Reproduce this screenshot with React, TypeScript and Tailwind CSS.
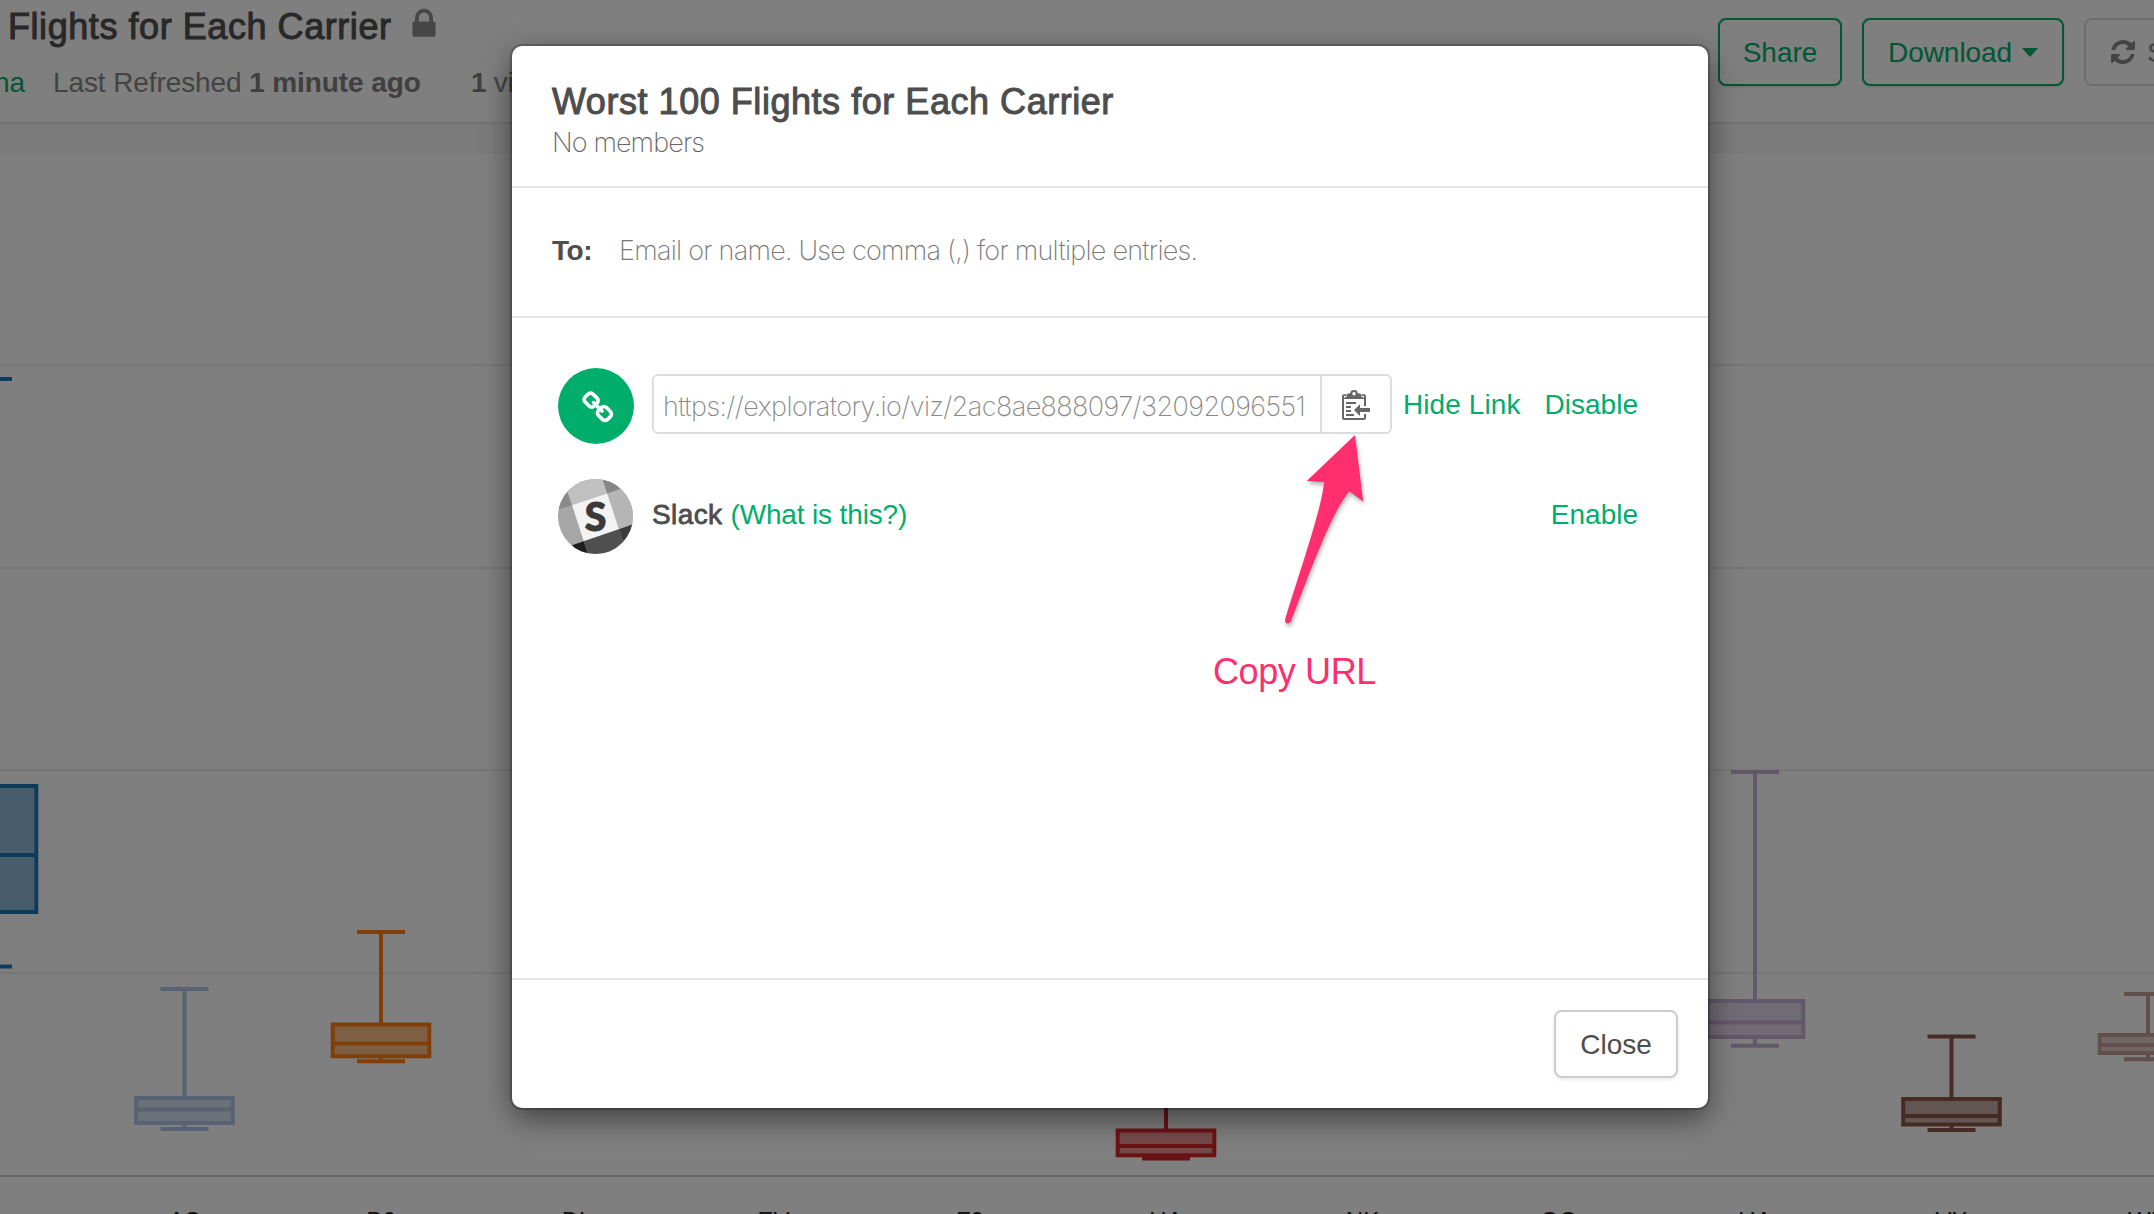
type Box = {
  label: string;
  x: number;
  color: string;
  high: number;
  q3: number;
  median: number;
  q1: number;
  low: number;
};

const boxes: Box[] = [
  { label: "AA", x: -12, color: "#1f77b4", high: 379, q3: 786, median: 855, q1: 912, low: 966.5 },
  { label: "AS", x: 184.5, color: "#aec7e8", high: 989, q3: 1098, median: 1109.5, q1: 1123, low: 1129 },
  { label: "B6", x: 381, color: "#ff7f0e", high: 932, q3: 1024.5, median: 1043.5, q1: 1056.3, low: 1061.2 },
  { label: "HA", x: 1166, color: "#d62728", high: 1050, q3: 1130.5, median: 1146, q1: 1155.3, low: 1158.5 },
  { label: "UA", x: 1755, color: "#c5b0d5", high: 772, q3: 1001, median: 1022.5, q1: 1037, low: 1045.7 },
  { label: "VX", x: 1951.5, color: "#8c564b", high: 1036.5, q3: 1099, median: 1116, q1: 1124.5, low: 1130 },
  { label: "WN", x: 2148, color: "#c49c94", high: 994, q3: 1035, median: 1045, q1: 1053, low: 1059.3 },
];

const gridLines = [365, 568, 770, 973];

const axisLabels: [string, number][] = [
  ["AA", -12],
  ["AS", 184.5],
  ["B6", 381],
  ["DL", 577],
  ["EV", 773.5],
  ["F9", 970],
  ["HA", 1166],
  ["NK", 1362.5],
  ["OO", 1559],
  ["UA", 1755],
  ["VX", 1951.5],
  ["WN", 2148],
];

function BoxPlot() {
  return (
    <svg className="block h-[1090px] w-[2154px]" viewBox="0 124 2154 1090">
      <rect x="0" y="124" width="2154" height="30" fill="#f7f7f7" />
      {gridLines.map((y) => (
        <rect key={y} x="0" y={y - 1} width="2154" height="2" fill="#ededed" />
      ))}
      <rect x="0" y="1175" width="2154" height="2" fill="#d2d2d2" />
      {boxes.map((b) => (
        <g key={b.label} stroke={b.color} strokeWidth="4">
          <rect x={b.x - 48.3} y={b.q3} width="96.6" height={b.q1 - b.q3} fill={b.color} fillOpacity="0.5" />
          <path
            fill="none"
            d={`M${b.x - 24} ${b.high}H${b.x + 24}M${b.x} ${b.high}V${b.q3}M${b.x - 48} ${b.median}H${b.x + 48}M${b.x} ${b.q1}V${b.low}M${b.x - 24} ${b.low}H${b.x + 24}`}
          />
        </g>
      ))}
      {axisLabels.map(([label, x]) => (
        <text key={label} x={x} y="1229" textAnchor="middle" fontSize="24" fill="#222">
          {label}
        </text>
      ))}
    </svg>
  );
}

function LockIcon() {
  return (
    <svg className="h-9 w-9" viewBox="0 0 1792 1792" fill="#8f8f8f">
      <path d="M640 768h512v-192q0-106-75-181t-181-75-181 75-75 181v192zm832 96v576q0 40-28 68t-68 28h-960q-40 0-68-28t-28-68v-576q0-40 28-68t68-28h32v-192q0-184 132-316t316-132 316 132 132 316v192h32q40 0 68 28t28 68z" />
    </svg>
  );
}

function RefreshIcon() {
  return (
    <svg className="h-7 w-7" viewBox="0 0 1792 1792" fill="#8a8a8a">
      <path d="M1639 1056q0 5-1 7-64 268-268 434.5t-478 166.5q-146 0-282.5-55t-243.5-157l-129 129q-19 19-45 19t-45-19-19-45v-448q0-26 19-45t45-19h448q26 0 45 19t19 45-19 45l-137 137q71 66 161 102t187 36q134 0 250-65t186-179q11-17 53-117 8-23 30-23h192q13 0 22.5 9.5t9.5 22.5zm25-800v448q0 26-19 45t-45 19h-448q-26 0-45-19t-19-45 19-45l138-138q-148-137-349-137-134 0-250 65t-186 179q-11 17-53 117-8 23-30 23h-199q-13 0-22.5-9.5t-9.5-22.5v-7q65-268 270-434.5t480-166.5q146 0 284 55.5t245 156.5l130-129q19-19 45-19t45 19 19 45z" />
    </svg>
  );
}

function ChainIcon() {
  return (
    <svg className="h-[34px] w-[34px]" viewBox="0 0 1792 1792" fill="#fff">
      <path d="M1456 1216q0-40-28-68l-208-208q-28-28-68-28-42 0-72 32 3 3 19 18.5t21.5 21.5 15 19 13 25.5 3.5 27.5q0 40-28 68t-68 28q-15 0-27.5-3.5t-25.5-13-19-15-21.5-21.5-18.5-19q-33 31-33 73 0 40 28 68l206 207q27 27 68 27 40 0 68-26l147-146q28-28 28-67zm-703-705q0-40-28-68l-206-207q-28-28-68-28-39 0-68 27l-147 146q-28 28-28 67 0 40 28 68l208 208q27 27 68 27 42 0 72-31-3-3-19-18.5t-21.5-21.5-15-19-13-25.5-3.5-27.5q0-40 28-68t68-28q15 0 27.5 3.5t25.5 13 19 15 21.5 21.5 18.5 19q33-31 33-73zm895 705q0 120-85 203l-147 146q-83 83-203 83-121 0-204-85l-206-207q-83-83-83-203 0-123 88-209l-88-88q-86 88-208 88-120 0-204-84l-208-208q-84-84-84-204t85-203l147-146q83-83 203-83 121 0 204 85l206 207q83 83 83 203 0 123-88 209l88 88q86-88 208-88 120 0 204 84l208 208q84 84 84 204z" />
    </svg>
  );
}

function SlackLogo() {
  return (
    <svg className="h-[75px] w-[75px]" viewBox="56 385 224 224">
      <clipPath id="slack-circle">
        <circle cx="168" cy="497" r="112" />
      </clipPath>
      <g clipPath="url(#slack-circle)">
        <rect x="50" y="380" width="240" height="240" fill="#a6a6a6" />
        <polygon points="50,380 70,380 98,463 50,479" fill="#8a8a8a" />
        <polygon points="70,380 187.500,380 203,428 98,463" fill="#c0c0c0" />
        <polygon points="187.500,380 290,380 290,399 203,428" fill="#868686" />
        <polygon points="203,428 290,399 290,517 238,535" fill="#b5b5b5" />
        <polygon points="98,463 203,428 238,535 133,571" fill="#f3f3f3" />
        <polygon points="50,599 133,571 149,620 50,620" fill="#1e1e1e" />
        <polygon points="133,571 238,535 267,620 149,620" fill="#4f4f4f" />
        <polygon points="238,535 290,517 290,620 267,620" fill="#3b3b3b" />
        <text
          x="168"
          y="541"
          textAnchor="middle"
          fontFamily="Lato"
          fontWeight="900"
          fontSize="117"
          fill="#3a3a3a"
          stroke="#3a3a3a"
          strokeWidth="3"
        >
          S
        </text>
      </g>
    </svg>
  );
}

function ClipboardIcon() {
  return (
    <svg className="block h-[30px] w-7" viewBox="0 0 28 30" fill="#666">
      <path d="M0 6.500Q0 4.300 2.200 4.300H4.500V6H2V28H22V24H24V27.800Q24 30 21.800 30H2.200Q0 30 0 27.800ZM19.500 4.300H21.800Q24 4.300 24 6.500V16H22V6H19.500Z" />
      <path
        fillRule="evenodd"
        d="M2 9V8L5 6.300V4.300Q5.500 3.300 8.200 3.300Q8.500 0 12 0Q15.500 0 15.800 3.300Q18.500 3.300 19 4.300V6.300L22 8V9ZM12 2A1.700 1.700 0 0 0 12 5.400A1.700 1.700 0 0 0 12 2Z"
      />
      <path d="M4 12H14V14H4ZM4 16H9V18H4ZM4 20H9V22H4ZM4 24H12V26H4Z" />
      <path d="M12 20L18 14.300V18H28V22H18V26Z" />
    </svg>
  );
}

function CopyArrow() {
  return (
    <svg
      className="absolute left-[1270px] top-[425px] h-[210px] w-[110px] overflow-visible drop-shadow-[1px_3px_2px_rgba(0,0,0,0.3)]"
      viewBox="1270 425 110 210"
    >
      <path
        d="M1355 435L1363.200 501.500L1349.300 491.300C1334 510 1319 550 1309 574L1290.500 622Q1285.500 626 1285 620C1299 574 1323 505 1324 482L1306.700 481Z"
        fill="#ff2e6e"
      />
    </svg>
  );
}

function TopBar() {
  return (
    <header className="flex h-[124px] justify-between border-b-2 border-[#e6e6e6]">
      <div className="pt-[7px]">
        <div className="flex h-10 items-center pl-2">
          <h1 className="whitespace-nowrap text-[36px] leading-10 tracking-[0.56px] text-[#505050] [-webkit-text-stroke:1px_#505050]">
            Flights for Each Carrier
          </h1>
          <span className="-mt-1.5 ml-[14px]">
            <LockIcon />
          </span>
        </div>
        <div className="mt-[18px] flex whitespace-nowrap text-[28px] leading-9 text-[#868686]">
          <span className="-ml-[6px] w-[59px] text-[#00ad6b]">na</span>
          <span className="w-[418px] tracking-[-0.1px]">
            Last Refreshed <b className="text-[#808080]">1 minute ago</b>
          </span>
          <span className="tracking-[-0.3px]">
            <b className="text-[#808080]">1</b> views
          </span>
        </div>
      </div>
      <div className="-mr-[70px] flex gap-5 pt-[18px] text-[28px]">
        <button className="h-[68px] w-[124px] rounded-lg border-2 border-[#00ad6b] pt-0.5 text-[#00ad6b] shadow-sm">Share</button>
        <button className="flex h-[68px] w-[202px] items-center rounded-lg border-2 border-[#00ad6b] pl-6 text-[#00ad6b] shadow-sm">
          <span className="pt-0.5 tracking-[-0.05px]">Download</span>
          <span className="ml-[10px] border-x-8 border-t-[9px] border-x-transparent border-t-[#00ad6b]" />
        </button>
        <button className="flex h-[68px] w-[140px] items-center gap-2.5 rounded-lg border-2 border-[#dcdcdc] pl-[23px] text-[#8a8a8a]">
          <RefreshIcon />
          <span className="pt-0.5">Sync</span>
        </button>
      </div>
    </header>
  );
}

function ShareDialog() {
  return (
    <section className="mt-[46px] flex h-[1062px] w-[1196px] flex-col rounded-[10px] bg-white text-[28px] text-[#4d4d4d] shadow-[0_0_0_2px_rgba(0,0,0,0.2),0_10px_30px_rgba(0,0,0,0.5)]">
      <div className="h-[142px] border-b-2 border-[#e5e5e5] pl-10 pt-9">
        <h2 className="whitespace-nowrap text-[36px] leading-10 tracking-[0.54px] [-webkit-text-stroke:1px_#4d4d4d]">
          Worst 100 Flights for Each Carrier
        </h2>
        <p className="mt-[5px] font-['Inter'] text-[27px] font-extralight leading-8 tracking-[-0.9px] text-[#666]">No members</p>
      </div>
      <div className="flex h-[130px] items-center border-b-2 border-[#e5e5e5] pb-0.5 pl-10">
        <b className="w-[67px] tracking-[-0.5px]">To:</b>
        <span className="font-['Inter'] text-[27px] font-extralight tracking-[-0.75px] text-[#777]">
          Email or name. Use comma (,) for multiple entries.
        </span>
      </div>
      <div className="flex h-[660px] flex-col gap-[34px] pl-[46px] pr-[70px] pt-[50px]">
        <div className="flex h-[76px] items-center">
          <span className="flex h-[76px] w-[76px] items-center justify-center rounded-full bg-[#00ad6b]">
            <span className="ml-[5px] mt-[3px]">
              <ChainIcon />
            </span>
          </span>
          <div className="-mt-1 ml-[18px] flex h-[60px] w-[740px] rounded-md border-2 border-[#ddd]">
            <span className="flex w-[666px] items-center whitespace-nowrap pl-[9px] pt-[6px] font-['Inter'] text-[27px] font-extralight tracking-[-0.58px] text-[#888]">
              https://exploratory.io/viz/2ac8ae888097/32092096551
            </span>
            <span className="flex-1 border-l-2 border-[#ddd] pl-[20px] pt-[14px]">
              <ClipboardIcon />
            </span>
          </div>
          <div className="-mt-0.5 ml-auto flex gap-6 whitespace-nowrap text-[#00ad6b]">
            <span className="tracking-[0.1px]">Hide Link</span>
            <span>Disable</span>
          </div>
        </div>
        <div className="flex h-[76px] items-center">
          <span className="w-[94px]">
            <SlackLogo />
          </span>
          <span className="-mt-0.5 tracking-[0.4px] [-webkit-text-stroke:0.8px_#4d4d4d]">Slack</span>
          <span className="-mt-0.5 ml-2 tracking-[-0.15px] text-[#00ad6b]">(What is this?)</span>
          <span className="-mt-0.5 ml-auto text-[#00ad6b]">Enable</span>
        </div>
      </div>
      <div className="flex h-[130px] justify-end border-t-2 border-[#e5e5e5] pr-[30px] pt-[30px]">
        <button className="h-[68px] w-[124px] rounded-lg border-2 border-[#ccc] pt-0.5 shadow-[0_2px_4px_rgba(0,0,0,0.08)]">Close</button>
      </div>
    </section>
  );
}

export default function App() {
  return (
    <main className="relative h-[1214px] w-[2154px] overflow-hidden bg-white font-['Liberation_Sans',Arial,sans-serif]">
      <TopBar />
      <BoxPlot />
      <div className="absolute inset-0 flex justify-center bg-black/50 pl-[66px]">
        <ShareDialog />
      </div>
      <CopyArrow />
      <span className="absolute left-[1213px] top-[652px] text-[36px] leading-10 tracking-[-0.4px] text-[#ff2e6e]">Copy URL</span>
    </main>
  );
}
